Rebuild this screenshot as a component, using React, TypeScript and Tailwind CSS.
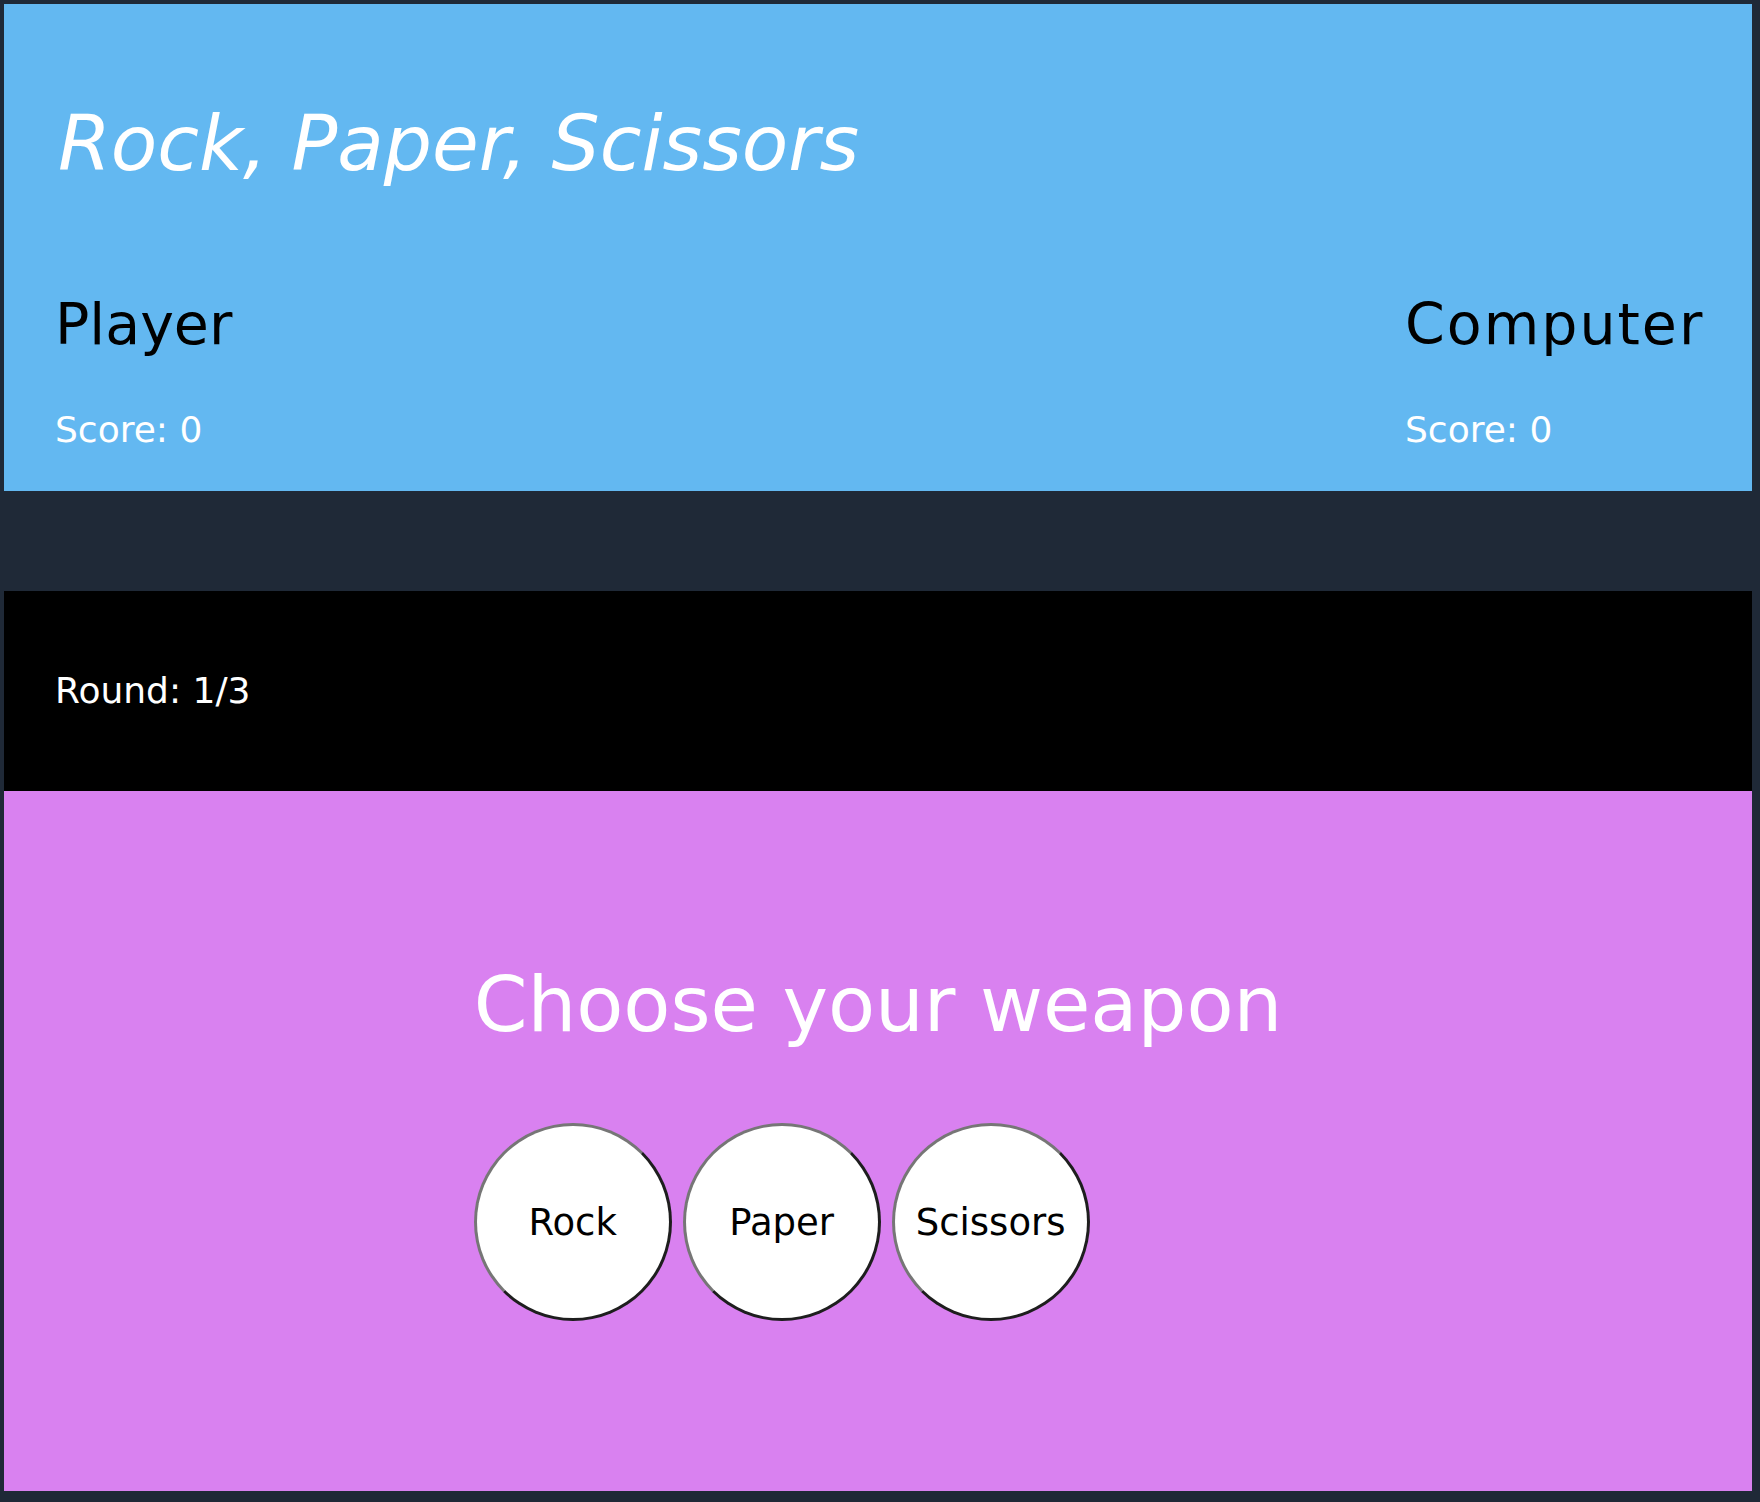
const font = "font-['DejaVu_Sans','Liberation_Sans',sans-serif]";

function PlayerCard({ name, score, right }: { name: string; score: number; right?: boolean }) {
  return (
    <div className={right ? "w-[299px] flex flex-col" : "flex flex-col"}>
      <h2 className={`text-[57px] leading-none text-black ${right ? "tracking-[2px]" : ""}`}>{name}</h2>
      <p className="mt-[59px] text-[36px] leading-none text-white">Score: {score}</p>
    </div>
  );
}

const weapons = ["Rock", "Paper", "Scissors"];

export default function App() {
  return (
    <div className={`min-h-screen bg-[#1f2937] pt-1 pl-1 pr-2 pb-[11px] ${font}`}>
      {/* header / scoreboard */}
      <header className="h-[487px] bg-[#63b8f1] pt-[102px] pl-[51px] pr-[48px]">
        <h1 className="ml-[3px] text-[76px] leading-none italic text-white">Rock, Paper, Scissors</h1>
        <div className="mt-[114px] flex justify-between">
          <PlayerCard name="Player" score={0} />
          <PlayerCard name="Computer" score={0} right />
        </div>
      </header>

      <div className="h-[100px]" />

      {/* round counter */}
      <div className="h-[200px] bg-black flex items-center pl-[51px]">
        <p className="text-[36px] leading-none text-white">Round: 1/3</p>
      </div>

      {/* weapon picker */}
      <main className="h-[700px] bg-[#d981f0] pt-[175px] flex justify-center">
        <div className="w-fit">
          <h2 className="text-[77px] leading-none text-white">Choose your weapon</h2>
          <div className="mt-[80px] flex gap-[11px]">
            {weapons.map((w) => (
              <button
                key={w}
                className="w-[198px] h-[198px] rounded-full bg-white border-[3px] border-t-[#767676] border-l-[#767676] border-b-[#1e1e1e] border-r-[#1e1e1e] text-[37px] leading-none text-black flex items-center justify-center"
              >
                {w}
              </button>
            ))}
          </div>
        </div>
      </main>
    </div>
  );
}
